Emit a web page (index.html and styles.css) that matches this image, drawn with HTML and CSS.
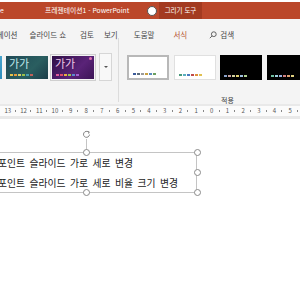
FILE: index.html
```html
<!DOCTYPE html>
<html lang="ko">
<head>
<meta charset="utf-8">
<link rel="stylesheet" href="styles.css">
</head>
<body>
<div class="app">
  <div class="topstrip"></div>
  <div class="titlebar">
    <span class="title-left">e</span>
    <span class="title-text">프레젠테이션1 - PowerPoint</span>
    <span class="ctx-tab">그리기 도구</span>
    <span class="top-handle"></span>
  </div>
  <div class="tabs">
    <span class="tab tab-first">애니메이션</span>
    <span class="tab tab-show">슬라이드 쇼</span>
    <span class="tab tab-review">검토</span>
    <span class="tab tab-view">보기</span>
    <span class="tab tab-help">도움말</span>
    <span class="tab tab-format">서식</span>
    <span class="tab tab-search">
      <svg class="search-icon" width="8" height="8" viewBox="0 0 8 8"><circle cx="4.8" cy="3.2" r="2.4" fill="none" stroke="#555" stroke-width="0.9"/><line x1="3.1" y1="4.9" x2="0.8" y2="7.2" stroke="#555" stroke-width="0.9"/></svg>
      검색
    </span>
  </div>
  <div class="ribbon">
    <div class="gallery">
      <div class="thumb thumb-cyan"></div>
      <div class="thumb thumb-teal">
        <span class="gaga">가가</span>
        <span class="dots"><i style="background:#e6c34a"></i><i style="background:#e59a3c"></i><i style="background:#d8d06a"></i><i style="background:#9bc04a"></i><i style="background:#4aa0b0"></i><i style="background:#c0605a"></i></span>
      </div>
      <div class="thumb thumb-purple">
        <span class="gaga gaga-pink">가가</span>
        <span class="pin"></span>
        <span class="dots"><i style="background:#e05a9a"></i><i style="background:#e0506a"></i><i style="background:#e8b040"></i><i style="background:#9ac050"></i><i style="background:#5a8ad0"></i><i style="background:#a060d0"></i></span>
      </div>
      <div class="more"><span class="more-arrow"></span></div>
    </div>
    <div class="sep"></div>
    <div class="group2">
      <div class="variants">
        <div class="thumb thumb-white selected">
          <span class="dots"><i style="background:#3a5a9a"></i><i style="background:#5a6a7a"></i><i style="background:#9a9a9a"></i><i style="background:#c8a040"></i><i style="background:#5a8ac0"></i><i style="background:#6aa060"></i></span>
        </div>
        <div class="thumb thumb-white">
          <span class="dots"><i style="background:#4a9a7a"></i><i style="background:#5ab0c0"></i><i style="background:#4a7ac0"></i><i style="background:#c04a4a"></i><i style="background:#e0903a"></i><i style="background:#e0c050"></i></span>
        </div>
        <div class="thumb thumb-black">
          <span class="dots"><i style="background:#8aa0c8"></i><i style="background:#c8a0a0"></i><i style="background:#d0d0a0"></i><i style="background:#e0d070"></i><i style="background:#a0c0e0"></i><i style="background:#b0d090"></i></span>
        </div>
        <div class="thumb thumb-black">
          <span class="dots"><i style="background:#70c0a0"></i><i style="background:#a0d0e0"></i><i style="background:#9ab0e0"></i><i style="background:#d08080"></i><i style="background:#e0a070"></i><i style="background:#e0d080"></i></span>
        </div>
      </div>
      <div class="group-label">적용</div>
    </div>
  </div>
  <div class="ruler-zone">
    <div class="ruler">
      <span>13</span><span>12</span><span>11</span><span>10</span><span>9</span><span>8</span><span>7</span><span>6</span><span>5</span><span>4</span><span>3</span><span>2</span><span>1</span><span>0</span><span>1</span><span>2</span><span>3</span><span>4</span><span>5</span>
    </div>
  </div>
  <div class="canvas">
    <div class="textbox">
      <p class="line">파워포인트 슬라이드 가로 세로 변경</p>
      <p class="line">파워포인트 슬라이드 가로 세로 비율 크기 변경</p>
      <span class="rot-stem"></span>
      <span class="rot-handle">
        <svg width="9" height="9" viewBox="0 0 9 9"><path d="M6.6 2.2 A3 3 0 1 0 7.5 4.6" fill="none" stroke="#777" stroke-width="0.9"/><path d="M5.4 1.4 L7.2 1.9 L6.6 3.6" fill="none" stroke="#777" stroke-width="0.9"/></svg>
      </span>
      <span class="h h-tm"></span>
      <span class="h h-tr"></span>
      <span class="h h-mr"></span>
      <span class="h h-br"></span>
      <span class="h h-bm"></span>
    </div>
  </div>
</div>
</body>
</html>
```
FILE: styles.css
```css
html, body {
  margin: 0;
  padding: 0;
  background: #ffffff;
}
body {
  width: 300px;
  height: 300px;
  overflow: hidden;
  font-family: "Noto Sans CJK KR", "Noto Sans", sans-serif;
}
.app {
  width: 300px;
  height: 300px;
  display: flex;
  flex-direction: column;
}
.topstrip {
  height: 2px;
  background: #ffffff;
}
.titlebar {
  position: relative;
  height: 17px;
  background: #bb472a;
  display: flex;
  align-items: stretch;
  color: #ffffff;
  font-size: 6.8px;
  white-space: nowrap;
}
.title-left {
  width: 45px;
  line-height: 17px;
}
.title-text {
  width: 114px;
  line-height: 17px;
}
.ctx-tab {
  width: 43px;
  background: #a33a20;
  line-height: 17px;
  text-align: center;
  font-size: 6.5px;
}
.top-handle {
  position: absolute;
  left: 147px;
  top: 4px;
  width: 8px;
  height: 8px;
  border-radius: 50%;
  background: #ffffff;
  border: 1px solid #555555;
}
.tabs {
  height: 26px;
  background: #f4f4f4;
  display: flex;
  align-items: flex-end;
  padding-bottom: 5px;
  box-sizing: border-box;
  font-size: 7.5px;
  line-height: 10px;
  color: #444444;
  white-space: nowrap;
}
.tab-first { margin-left: -17px; }
.tab-show { margin-left: 12px; }
.tab-review { margin-left: 14px; }
.tab-view { margin-left: 10px; }
.tab-help { margin-left: 16px; }
.tab-format { margin-left: 19px; color: #b5502e; }
.tab-search {
  margin-left: 22px;
  display: flex;
  align-items: center;
  gap: 3px;
}
.ribbon {
  height: 59px;
  background: #f4f4f4;
  display: flex;
  align-items: flex-start;
}
.gallery {
  width: 153px;
  flex: none;
  display: flex;
  align-items: flex-start;
  padding-top: 8px;
  gap: 4px;
  margin-left: -40px;
}
.thumb {
  position: relative;
  width: 42px;
  height: 23px;
  flex: none;
  margin-top: 3px;
  box-sizing: border-box;
}
.thumb-cyan {
  background: linear-gradient(135deg, #7fd0ec, #2a8cbc);
}
.thumb-teal {
  background: linear-gradient(135deg, #1f4a57, #2a5e60 60%, #1b3c48);
}
.thumb-purple {
  background: linear-gradient(135deg, #2e0f45, #5a2378 60%, #3c1456);
  outline: 1px solid #cfcfcf;
  outline-offset: 1px;
}
.gaga {
  position: absolute;
  left: 3px;
  top: 0px;
  font-size: 11px;
  line-height: 14px;
  color: #bfe6ea;
}
.gaga-pink { color: #f0c8e8; }
.pin {
  position: absolute;
  right: 2px;
  top: 1px;
  width: 3px;
  height: 3px;
  border-radius: 50%;
  background: #e070b0;
}
.dots {
  position: absolute;
  left: 4px;
  bottom: 3px;
  display: flex;
  gap: 1px;
}
.dots i {
  display: block;
  width: 3px;
  height: 2px;
}
.more {
  width: 13px;
  height: 28px;
  flex: none;
  box-sizing: border-box;
  border: 1px solid #d6d6d6;
  background: #f8f8f8;
  display: flex;
  align-items: center;
  justify-content: center;
  margin-left: 1px;
}
.more-arrow {
  width: 0;
  height: 0;
  border-left: 2px solid transparent;
  border-right: 2px solid transparent;
  border-top: 2px solid #555555;
}
.sep {
  width: 1px;
  flex: none;
  height: 64px;
  margin-top: -7px;
  background: #dcdcdc;
  margin-left: 5px;
}
.group2 {
  flex: 1;
  display: flex;
  flex-direction: column;
  padding-left: 8px;
  min-width: 0;
}
.variants {
  display: flex;
  gap: 4.5px;
  padding-top: 7px;
}
.variants .thumb {
  height: 25px;
  margin-top: 3px;
}
.thumb-white {
  background: #ffffff;
  border: 1px solid #e0e0e0;
}
.thumb-white.selected {
  border: 2px solid #b8b8b8;
}
.thumb-black {
  background: #000000;
}
.group-label {
  margin-top: 15px;
  padding-left: 94px;
  font-size: 7px;
  line-height: 10px;
  color: #444444;
}
.ruler-zone {
  height: 15px;
  background: #e9e9e9;
  padding-top: 2px;
  box-sizing: border-box;
}
.ruler {
  height: 10px;
  background: #fbfbfb;
  display: flex;
  font-size: 6px;
  line-height: 10px;
  color: #555555;
}
.ruler span {
  position: relative;
  width: 15.7px;
  flex: none;
  text-align: center;
}
.ruler span::after {
  content: "";
  position: absolute;
  right: 0;
  top: 4px;
  width: 1px;
  height: 2px;
  background: #888888;
}
.canvas {
  flex: 1;
  background: #ffffff;
}
.textbox {
  position: relative;
  margin-top: 33px;
  margin-left: -25px;
  width: 222px;
  height: 41px;
  box-sizing: border-box;
  border: 1px solid #c4c4c4;
}
.line {
  margin: 0;
  text-indent: 4px;
  font-size: 9.8px;
  line-height: 20px;
  word-spacing: 1.7px;
  color: #1a1a1a;
  white-space: nowrap;
}
.rot-stem {
  position: absolute;
  left: 110px;
  top: -14px;
  width: 1px;
  height: 14px;
  background: #c4c4c4;
}
.rot-handle {
  position: absolute;
  left: 106px;
  top: -23px;
  width: 9px;
  height: 9px;
  display: flex;
}
.h {
  position: absolute;
  width: 5px;
  height: 5px;
  border-radius: 50%;
  background: #ffffff;
  border: 1px solid #8a8a8a;
}
.h-tm { left: 107px; top: -4px; }
.h-tr { left: 218px; top: -4px; }
.h-mr { left: 218px; top: 16px; }
.h-br { left: 218px; top: 36px; }
.h-bm { left: 107px; top: 36px; }
```
